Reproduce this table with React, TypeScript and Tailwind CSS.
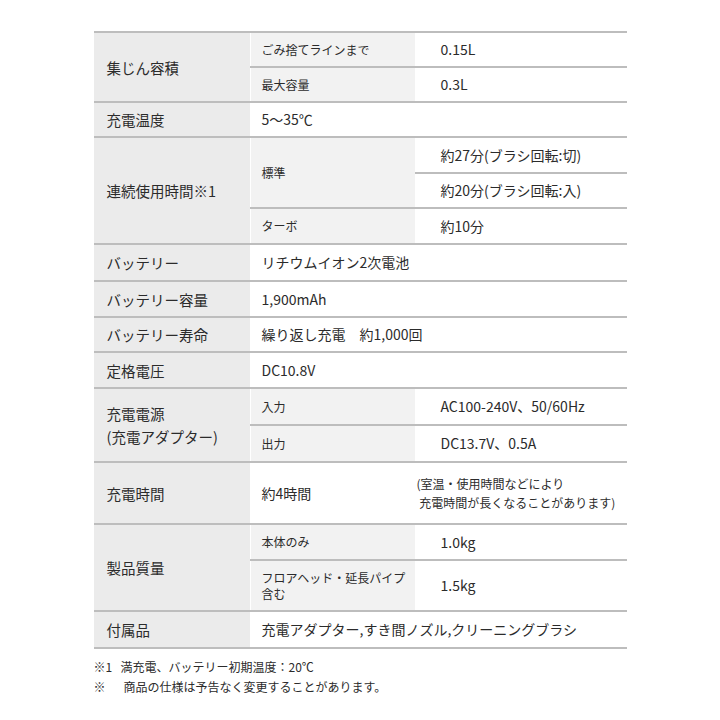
import type { ReactNode } from "react"

const font = "[font-family:'Noto_Sans_CJK_JP','Noto_Sans',sans-serif]"

function Label({ className = "", children }: { className?: string; children: ReactNode }) {
  return (
    <div className={`col-start-1 flex items-center bg-[#ebebeb] pl-[13px] text-[14.5px] leading-[23px] border-b-2 border-[#bdbdbd] ${className}`}>
      <div>{children}</div>
    </div>
  )
}

function Sub({ className = "", children }: { className?: string; children: ReactNode }) {
  return (
    <div className={`col-start-2 flex items-center bg-[#f2f2f2] pl-[12px] text-[12px] leading-[16px] border-b-2 border-[#bdbdbd] shadow-[inset_1px_0_0_#ffffff] ${className}`}>
      <div>{children}</div>
    </div>
  )
}

function Value({ className = "", children }: { className?: string; children: ReactNode }) {
  return (
    <div className={`col-start-3 flex items-center bg-white pl-[26px] text-[14px] border-b-2 border-[#bdbdbd] ${className}`}>
      <div>{children}</div>
    </div>
  )
}

function Wide({ className = "", children }: { className?: string; children: ReactNode }) {
  return (
    <div className={`col-start-2 col-span-2 flex items-center bg-white pl-[12px] text-[14px] border-b-2 border-[#bdbdbd] ${className}`}>
      <div>{children}</div>
    </div>
  )
}

export default function App() {
  return (
    <div className={`min-h-[720px] w-[720px] bg-white pt-[31px] text-[#2b2b2b] ${font}`}>
      <div className="mx-auto w-[533px]">
        <div className="grid grid-cols-[156px_165px_212px] grid-rows-[35px_35px_35px_36px_35px_36px_37px_36px_35px_36px_37px_37px_62px_36px_51px_37px] border-t-2 border-[#bdbdbd]">
          {/* 集じん容積 */}
          <Label className="row-span-2">集じん容積</Label>
          <Sub>ごみ捨てラインまで</Sub>
          <Value>0.15L</Value>
          <Sub>最大容量</Sub>
          <Value>0.3L</Value>

          <Label>充電温度</Label>
          <Wide>5〜35℃</Wide>

          {/* 連続使用時間 */}
          <Label className="row-span-3">連続使用時間※1</Label>
          <Sub className="row-span-2">標準</Sub>
          <Value>約27分(ブラシ回転:切)</Value>
          <Value>約20分(ブラシ回転:入)</Value>
          <Sub>ターボ</Sub>
          <Value>約10分</Value>

          <Label>バッテリー</Label>
          <Wide>リチウムイオン2次電池</Wide>
          <Label>バッテリー容量</Label>
          <Wide>1,900mAh</Wide>
          <Label>バッテリー寿命</Label>
          <Wide>繰り返し充電　約1,000回</Wide>
          <Label className="text-[13.5px]">定格電圧</Label>
          <Wide>DC10.8V</Wide>

          {/* 充電電源 */}
          <Label className="row-span-2">
            充電電源
            <br />
            (充電アダプター)
          </Label>
          <Sub>入力</Sub>
          <Value>AC100-240V、50/60Hz</Value>
          <Sub>出力</Sub>
          <Value>DC13.7V、0.5A</Value>

          {/* 充電時間 */}
          <Label>充電時間</Label>
          <div className="col-start-2 flex items-center bg-white pl-[12px] text-[14px] border-b-2 border-[#bdbdbd]">約4時間</div>
          <div className="col-start-3 flex items-center bg-white pl-[2px] text-[12px] leading-[19px] whitespace-pre border-b-2 border-[#bdbdbd]">
            {"(室温・使用時間などにより\n 充電時間が長くなることがあります)"}
          </div>

          {/* 製品質量 */}
          <Label className="row-span-2">製品質量</Label>
          <Sub>本体のみ</Sub>
          <Value>1.0kg</Value>
          <Sub>
            フロアヘッド・延長パイプ
            <br />
            含む
          </Sub>
          <Value>1.5kg</Value>

          <Label>付属品</Label>
          <Wide>充電アダプター,すき間ノズル,クリーニングブラシ</Wide>
        </div>

        <div className="mt-[8px] text-[12px] leading-[20px]">
          <div className="flex">
            <span className="w-[27px]">※1</span>
            <span>満充電、バッテリー初期温度：20℃</span>
          </div>
          <div className="flex">
            <span className="w-[30px]">※</span>
            <span>商品の仕様は予告なく変更することがあります。</span>
          </div>
        </div>
      </div>
    </div>
  )
}
